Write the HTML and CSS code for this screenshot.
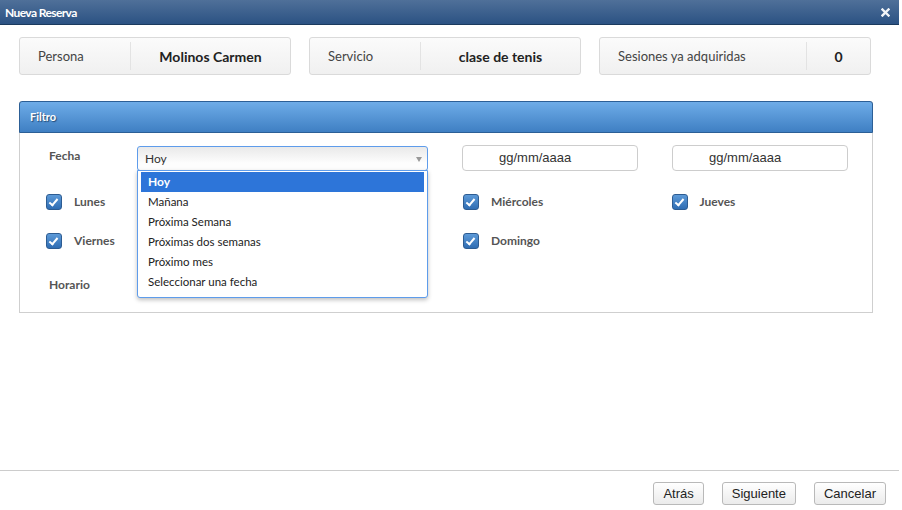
FILE: index.html
```html
<!DOCTYPE html>
<html>
<head>
    <title>Nueva Reserva</title>
    <meta charset="UTF-8">
    <link rel="stylesheet" href="styles.css">
</head>
<body>
    <div class="dialog">
        <div class="titlebar">
            <span class="title">Nueva Reserva</span>
            <svg class="close" width="9" height="9" viewBox="0 0 9 9">
                <path d="M1.5 1.5 L7.5 7.5 M7.5 1.5 L1.5 7.5" stroke="#f2f4f7" stroke-width="2.4" stroke-linecap="square"/>
            </svg>
        </div>

        <div class="info-row">
            <div class="info-card">
                <div class="info-label">Persona</div>
                <div class="info-value">Molinos Carmen</div>
            </div>
            <div class="info-card">
                <div class="info-label">Servicio</div>
                <div class="info-value">clase de tenis</div>
            </div>
            <div class="info-card info-card-num">
                <div class="info-label">Sesiones ya adquiridas</div>
                <div class="info-value">0</div>
            </div>
        </div>

        <div class="panel">
            <div class="panel-header">Filtro</div>
            <div class="panel-body">
                <div class="fecha-row">
                    <span class="field-label">Fecha</span>
                    <div class="select-wrap">
                        <div class="select select-open">Hoy<span class="arrow"></span></div>
                        <ul class="dropdown">
                            <li class="selected">Hoy</li>
                            <li>Mañana</li>
                            <li>Próxima Semana</li>
                            <li>Próximas dos semanas</li>
                            <li>Próximo mes</li>
                            <li>Seleccionar una fecha</li>
                        </ul>
                    </div>
                    <div class="date-input">gg/mm/aaaa</div>
                    <div class="date-input">gg/mm/aaaa</div>
                </div>

                <div class="days">
                    <label class="day"><span class="check"></span>Lunes</label>
                    <label class="day"><span class="check"></span>Martes</label>
                    <label class="day"><span class="check"></span>Miércoles</label>
                    <label class="day"><span class="check"></span>Jueves</label>
                    <label class="day"><span class="check"></span>Viernes</label>
                    <label class="day"><span class="check"></span>Sábado</label>
                    <label class="day"><span class="check"></span>Domingo</label>
                </div>

                <div class="horario-row">
                    <span class="field-label">Horario</span>
                    <div class="select select-small"><span class="arrow"></span></div>
                </div>
            </div>
        </div>

        <div class="footer">
            <button type="button">Atrás</button>
            <button type="button">Siguiente</button>
            <button type="button">Cancelar</button>
        </div>
    </div>
</body>
</html>
```

FILE: styles.css
```css
body {
    margin: 0;
    background: #fff;
    font-family: Lato, "Open Sans", sans-serif;
    color: #333;
}
.dialog {
    width: 899px;
    height: 510px;
    display: flex;
    flex-direction: column;
}

/* barra del titolo */
.titlebar {
    height: 24px;
    display: flex;
    align-items: center;
    justify-content: space-between;
    padding: 0 9px 0 5px;
    background: linear-gradient(#4f7099, #2b5283);
    border-bottom: 1px solid #1b3a5e;
    color: #fff;
}
.title {
    font-size: 12px;
    font-weight: bold;
    letter-spacing: -0.6px;
}
.close {
    display: block;
}

/* schede informative */
.info-row {
    display: flex;
    gap: 18px;
    margin: 12px 0 0 19px;
}
.info-card {
    width: 270px;
    height: 36px;
    display: flex;
    align-items: center;
    border: 1px solid #dadada;
    border-radius: 3px;
    background: linear-gradient(#fbfbfb, #f0f0f0);
}
.info-label {
    width: 92px;
    padding-left: 18px;
    font-size: 13px;
    color: #444;
    height: 28px;
    line-height: 28px;
    border-right: 1px solid #e3e3e3;
}
.info-value {
    flex: 1;
    text-align: center;
    font-size: 14px;
    font-weight: bold;
    color: #222;
}
.info-card-num .info-label {
    width: 188px;
}

/* pannello filtro */
.panel {
    margin: 26px 0 0 19px;
    width: 852px;
    border: 1px solid #cfcfcf;
    border-top: none;
    border-radius: 3px 3px 0 0;
}
.panel-header {
    height: 30px;
    line-height: 30px;
    margin: 0 -1px;
    padding-left: 10px;
    background: linear-gradient(#6eace8, #3f7fc3);
    border: 1px solid #2c5f96;
    border-radius: 3px 3px 0 0;
    color: #fff;
    font-size: 11px;
    font-weight: bold;
    text-shadow: 1px 1px 1px #234a75;
}
.panel-body {
    padding: 12px 0 15px 26px;
}
.field-label {
    width: 88px;
    padding-left: 3px;
    font-size: 12px;
    font-weight: bold;
    color: #555;
}
.fecha-row {
    display: flex;
    align-items: center;
    gap: 34px;
}
.fecha-row .field-label {
    margin-right: -34px;
    align-self: flex-start;
    padding-top: 3px;
}
.select-wrap {
    position: relative;
}
.select {
    position: relative;
    box-sizing: border-box;
    width: 291px;
    height: 25px;
    line-height: 23px;
    padding-left: 7px;
    border: 1px solid #c6c6c6;
    border-radius: 3px;
    background: linear-gradient(#e9e9e9, #fdfdfd 70%);
    font-size: 12px;
    color: #333;
}
.select-open {
    border-color: #5e9ceb;
}
.arrow {
    position: absolute;
    right: 5px;
    top: 10px;
    border-left: 3px solid transparent;
    border-right: 3px solid transparent;
    border-top: 5px solid #999;
}
.dropdown {
    position: absolute;
    left: 0;
    top: 24px;
    z-index: 5;
    box-sizing: border-box;
    width: 291px;
    margin: 0;
    padding: 1px 3px 5px;
    list-style: none;
    background: #fff;
    border: 1px solid #5e9ceb;
    border-radius: 0 0 3px 3px;
    box-shadow: 0 2px 4px rgba(0, 0, 0, 0.25);
}
.dropdown li {
    height: 20px;
    line-height: 20px;
    padding-left: 7px;
    font-size: 11.5px;
    color: #222;
}
.dropdown li.selected {
    background: #2d75d9;
    color: #fff;
    font-weight: bold;
    font-size: 12px;
}
.date-input {
    box-sizing: border-box;
    width: 176px;
    height: 26px;
    line-height: 24px;
    padding-left: 36px;
    border: 1px solid #cdcdcd;
    border-radius: 4px;
    font-family: "Liberation Sans", Arial, sans-serif;
    font-size: 13px;
    color: #333;
}

/* giorni della settimana */
.days {
    display: grid;
    grid-template-columns: repeat(4, 208.5px);
    row-gap: 23px;
    margin-top: 22px;
}
.day {
    display: flex;
    align-items: center;
    gap: 12px;
    height: 16px;
    font-size: 12px;
    font-weight: bold;
    color: #555;
}
.check {
    width: 14px;
    height: 14px;
    margin-top: 2px;
    border: 1px solid #2d5c92;
    border-radius: 3px;
    background: linear-gradient(#5d9ad8, #2f6db3);
    position: relative;
}
.check::after {
    content: "";
    position: absolute;
    left: 4px;
    top: 2px;
    width: 3px;
    height: 7px;
    border-right: 2px solid #fff;
    border-bottom: 2px solid #fff;
    transform: rotate(40deg);
}

.horario-row {
    display: flex;
    align-items: center;
    margin-top: 23px;
}
.select-small {
    width: 86px;
    height: 26px;
}

/* pulsanti */
.footer {
    margin-top: auto;
    box-sizing: border-box;
    height: 40px;
    border-top: 1px solid #cccccc;
    display: flex;
    justify-content: flex-end;
    align-items: flex-start;
    gap: 18px;
    padding: 11px 13px 0 0;
}
button {
    height: 23px;
    padding: 0 9px;
    border: 1px solid #b9b9b9;
    border-radius: 3px;
    background: linear-gradient(#ffffff, #ebebeb);
    font-family: "Liberation Sans", Arial, sans-serif;
    font-size: 13px;
    color: #222;
}
```
